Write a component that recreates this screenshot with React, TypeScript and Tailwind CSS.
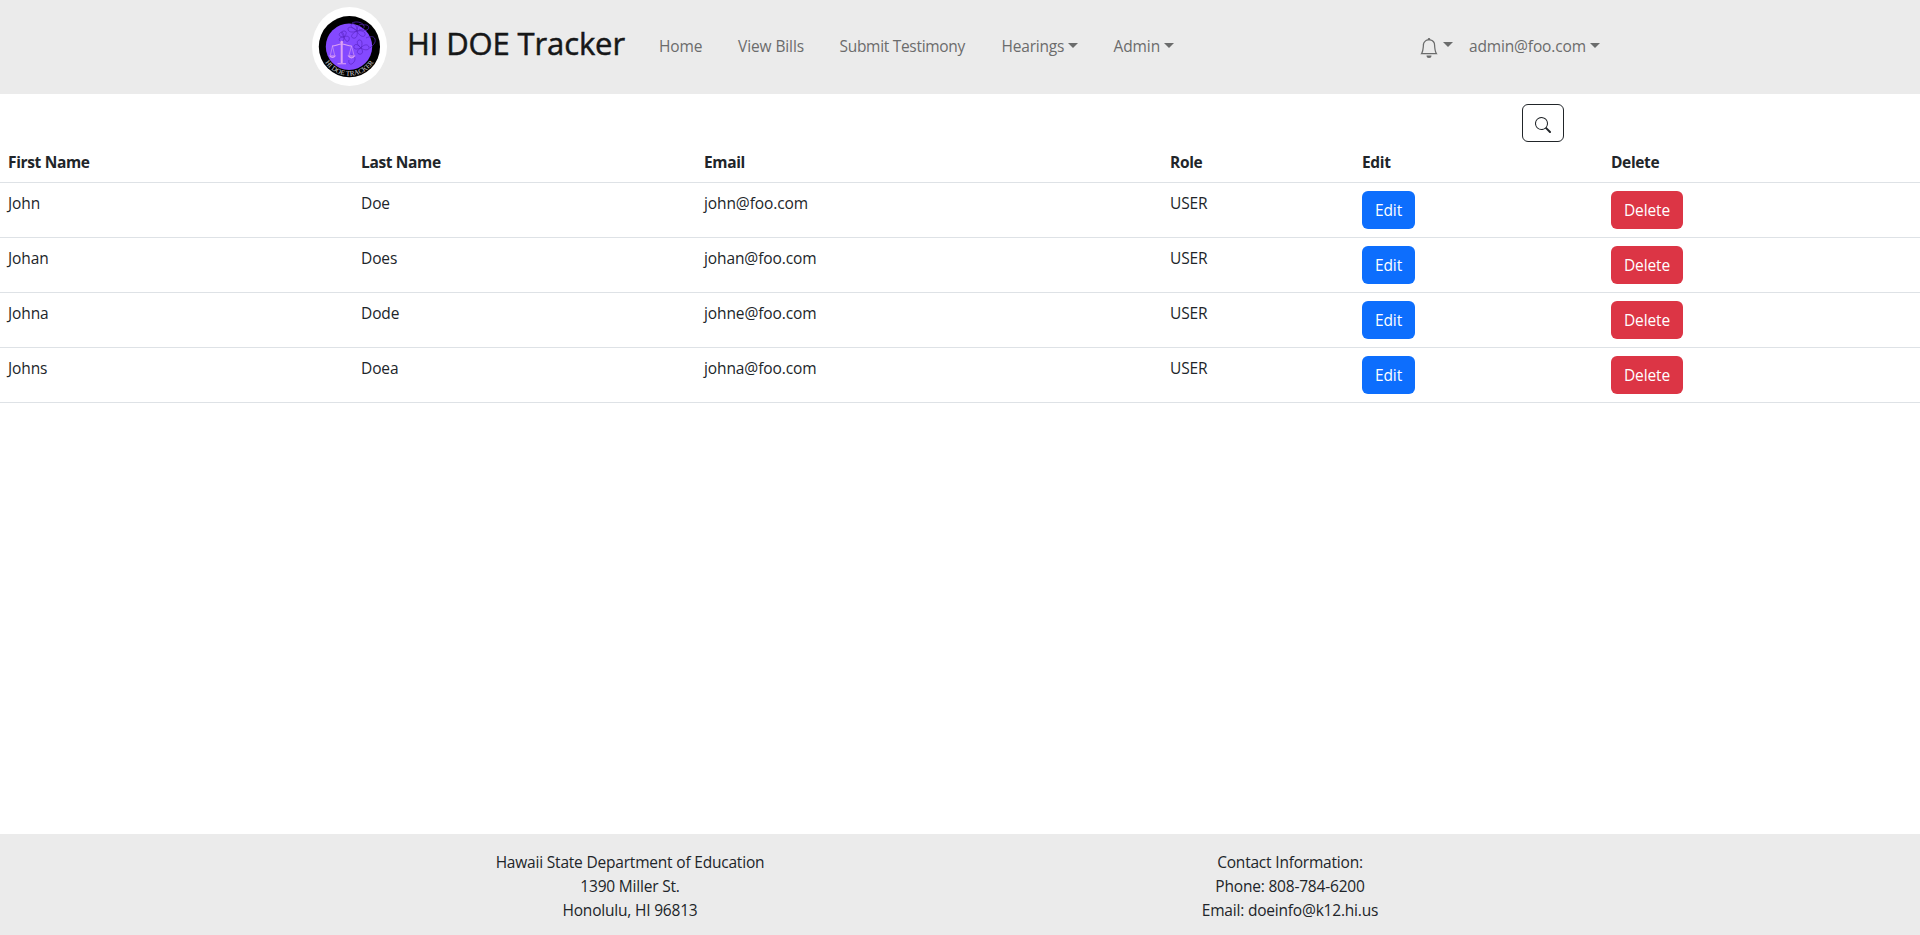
import React from "react";

const users = [
  { first: "John", last: "Doe", email: "john@foo.com", role: "USER" },
  { first: "Johan", last: "Does", email: "johan@foo.com", role: "USER" },
  { first: "Johna", last: "Dode", email: "johne@foo.com", role: "USER" },
  { first: "Johns", last: "Doea", email: "johna@foo.com", role: "USER" },
];

const columns = ["First Name", "Last Name", "Email", "Role", "Edit", "Delete"];

function Caret() {
  return (
    <span className="mb-1 ml-1 inline-block h-0 w-0 border-x-[5px] border-t-[5px] border-x-transparent border-t-current" />
  );
}

function Logo() {
  return (
    <svg className="h-[79px] w-[75px] shrink-0" viewBox="12 7 75 79">
      <ellipse cx="49.5" cy="46.5" rx="37.5" ry="39.5" fill="#fff" />
      <circle cx="49.4" cy="46.7" r="30.6" fill="#000" />
      <circle cx="49" cy="46.7" r="23.2" fill="#8449ff" />
      <g fill="none" stroke="#5a25c4" strokeWidth="0.7">
        <path d="M57 31c-4-3-8-5-5-7 3-1 5 2 5 7 0-5 3-8 6-6s0 5-6 6c5-1 9 1 8 4s-6 1-8-4c1 5-1 8-4 7s-1-5 4-7c-5 2-9 1-9-2s5-2 9 2" />
        <path d="M44 37c-3-4-3-6 0-6s3 3 0 6c4-2 6 0 5 3s-4 1-5-3c0 4-2 6-4 4s0-4 4-4c-4 0-6-2-4-4s4 0 4 4" />
        <path d="M61 48c-4-3-5-7-2-8s4 4 2 8c3-4 7-4 8-1s-4 4-8 1c3 4 1 7-2 6s-2-4 2-6c-5 2-8 1-7-2s5-1 7 2" />
        <path d="M52 23c4-2 9-1 12 2 5-1 6 3 3 5-3 1-6 0-8-1M66 38c4-2 8-2 9 1 1 4-2 6-5 9M51 55c4 0 5 4 3 7-3 4-6 2-5-2" />
      </g>
      <g fill="none" stroke="#dda2f4" strokeWidth="1.1">
        <path d="M41.7 42v21" strokeWidth="2" />
        <path d="M32 46c4 0 6-2 9.700-2s6 2 10 2M37.500 63.700h8.500" />
        <path d="M32.500 46l-2.200 9.500M32.500 46l2.200 9.500M51.500 46l-2.600 9.500M51.500 46l2.600 9.500" strokeWidth="0.6" />
        <path d="M30 56c1 2 4 2 5 0zM48.500 56c1.500 2.500 4.500 2.500 6 0z" />
      </g>
      <circle cx="41.7" cy="42" r="1.3" fill="#dda2f4" />
      <path id="logo-arc" d="M20.400 46.700A29 29 0 0 0 78.400 46.700" fill="none" />
      <text className="font-['Liberation_Serif',serif] text-[7px] tracking-normal" fill="#d4d4d4" textAnchor="middle">
        <textPath href="#logo-arc" startOffset="50%">
          HI DOE TRACKER
        </textPath>
      </text>
    </svg>
  );
}

function BellIcon() {
  return (
    <svg className="size-5" viewBox="0 0 16 16" fill="currentColor">
      <path d="M8 16a2 2 0 0 0 2-2H6a2 2 0 0 0 2 2M8 1.918l-.797.161A4 4 0 0 0 4 6c0 .628-.134 2.197-.459 3.742-.16.767-.376 1.566-.663 2.258h10.244c-.287-.692-.502-1.490-.663-2.258C12.134 8.197 12 6.628 12 6a4 4 0 0 0-3.203-3.920zM14.220 12c.223.447.481.801.78 1H1c.299-.199.557-.553.78-1C2.680 10.200 3 6.880 3 6c0-2.420 1.720-4.440 4.005-4.901a1 1 0 1 1 1.990 0A5 5 0 0 1 13 6c0 .88.32 4.200 1.220 6" />
    </svg>
  );
}

function SearchIcon() {
  return (
    <svg className="size-4" viewBox="0 0 16 16" fill="currentColor">
      <path d="M11.742 10.344a6.500 6.500 0 1 0-1.397 1.398h-.001q.044.060.098.115l3.850 3.850a1 1 0 0 0 1.415-1.414l-3.850-3.850a1 1 0 0 0-.115-.1zM12 6.500a5.500 5.500 0 1 1-11 0 5.500 5.500 0 0 1 11 0" />
    </svg>
  );
}

export default function App() {
  return (
    <div className="flex h-[935px] flex-col bg-white font-['Open_Sans','Noto_Sans',sans-serif] text-[15.5px] leading-6 tracking-[-0.1px] text-[#212529]">
      <nav className="h-[94px] bg-[#ebebeb]">
        <div className="mx-auto flex h-full w-[1320px] items-center px-3 text-[#6b6c6c]">
          <a className="flex h-[93px] w-[347px] items-center self-start text-[#161718]">
            <Logo />
            <h1 className="mb-2 ml-5 whitespace-nowrap text-[31px] font-medium leading-[38px] tracking-[-0.12px] [-webkit-text-stroke:0.5px_#161718]">
              HI DOE Tracker
            </h1>
          </a>
          <div className="mb-0.5 flex whitespace-nowrap">
            <a className="w-[79px]">Home</a>
            <a className="w-[101.5px]">View Bills</a>
            <a className="w-[162px] tracking-[-0.3px]">Submit Testimony</a>
            <a className="w-[112px] tracking-[-0.2px]">
              Hearings
              <Caret />
            </a>
            <a>
              Admin
              <Caret />
            </a>
          </div>
          <div className="mb-0.5 ml-auto flex items-center whitespace-nowrap">
            <a className="mr-4 flex h-6 items-center">
              <span className="mt-1">
                <BellIcon />
              </span>
              <Caret />
            </a>
            <a className="w-[139px] tracking-[-0.15px]">
              admin@foo.com
              <Caret />
            </a>
          </div>
        </div>
      </nav>

      <main className="flex-1">
        <div className="flex h-12 items-end justify-end pr-[356px]">
          <button className="flex h-[38px] w-[42px] items-center justify-center rounded-md border border-[#212529] pt-1">
            <SearchIcon />
          </button>
        </div>
        <table className="w-full table-fixed border-separate border-spacing-0 text-left">
          <colgroup>
            <col className="w-[353px]" />
            <col className="w-[343px]" />
            <col className="w-[466px]" />
            <col className="w-[192px]" />
            <col className="w-[249px]" />
            <col className="w-[317px]" />
          </colgroup>
          <thead>
            <tr className="h-[41px] align-top font-bold tracking-[-0.35px]">
              {columns.map((name) => (
                <th key={name} className="border-b border-[#dee2e6] p-2">
                  {name}
                </th>
              ))}
            </tr>
          </thead>
          <tbody>
            {users.map((user) => (
              <tr key={user.email} className="h-[55px] align-top">
                <td className="border-b border-[#dee2e6] p-2">{user.first}</td>
                <td className="border-b border-[#dee2e6] p-2">{user.last}</td>
                <td className="border-b border-[#dee2e6] p-2">{user.email}</td>
                <td className="border-b border-[#dee2e6] p-2">{user.role}</td>
                <td className="border-b border-[#dee2e6] p-2">
                  <button className="block h-[38px] w-[53px] rounded-md bg-[#0d6efd] text-white">Edit</button>
                </td>
                <td className="border-b border-[#dee2e6] p-2">
                  <button className="block h-[38px] w-[72px] rounded-md bg-[#dc3545] text-white">Delete</button>
                </td>
              </tr>
            ))}
          </tbody>
        </table>
      </main>

      <footer className="h-[101px] bg-[#ebebeb] pt-4 tracking-[-0.2px]">
        <div className="mx-auto grid w-[1320px] grid-cols-2 text-center">
          <div>
            <p>Hawaii State Department of Education</p>
            <p>1390 Miller St.</p>
            <p>Honolulu, HI 96813</p>
          </div>
          <div>
            <p>Contact Information:</p>
            <p>Phone: 808-784-6200</p>
            <p>Email: doeinfo@k12.hi.us</p>
          </div>
        </div>
      </footer>
    </div>
  );
}
